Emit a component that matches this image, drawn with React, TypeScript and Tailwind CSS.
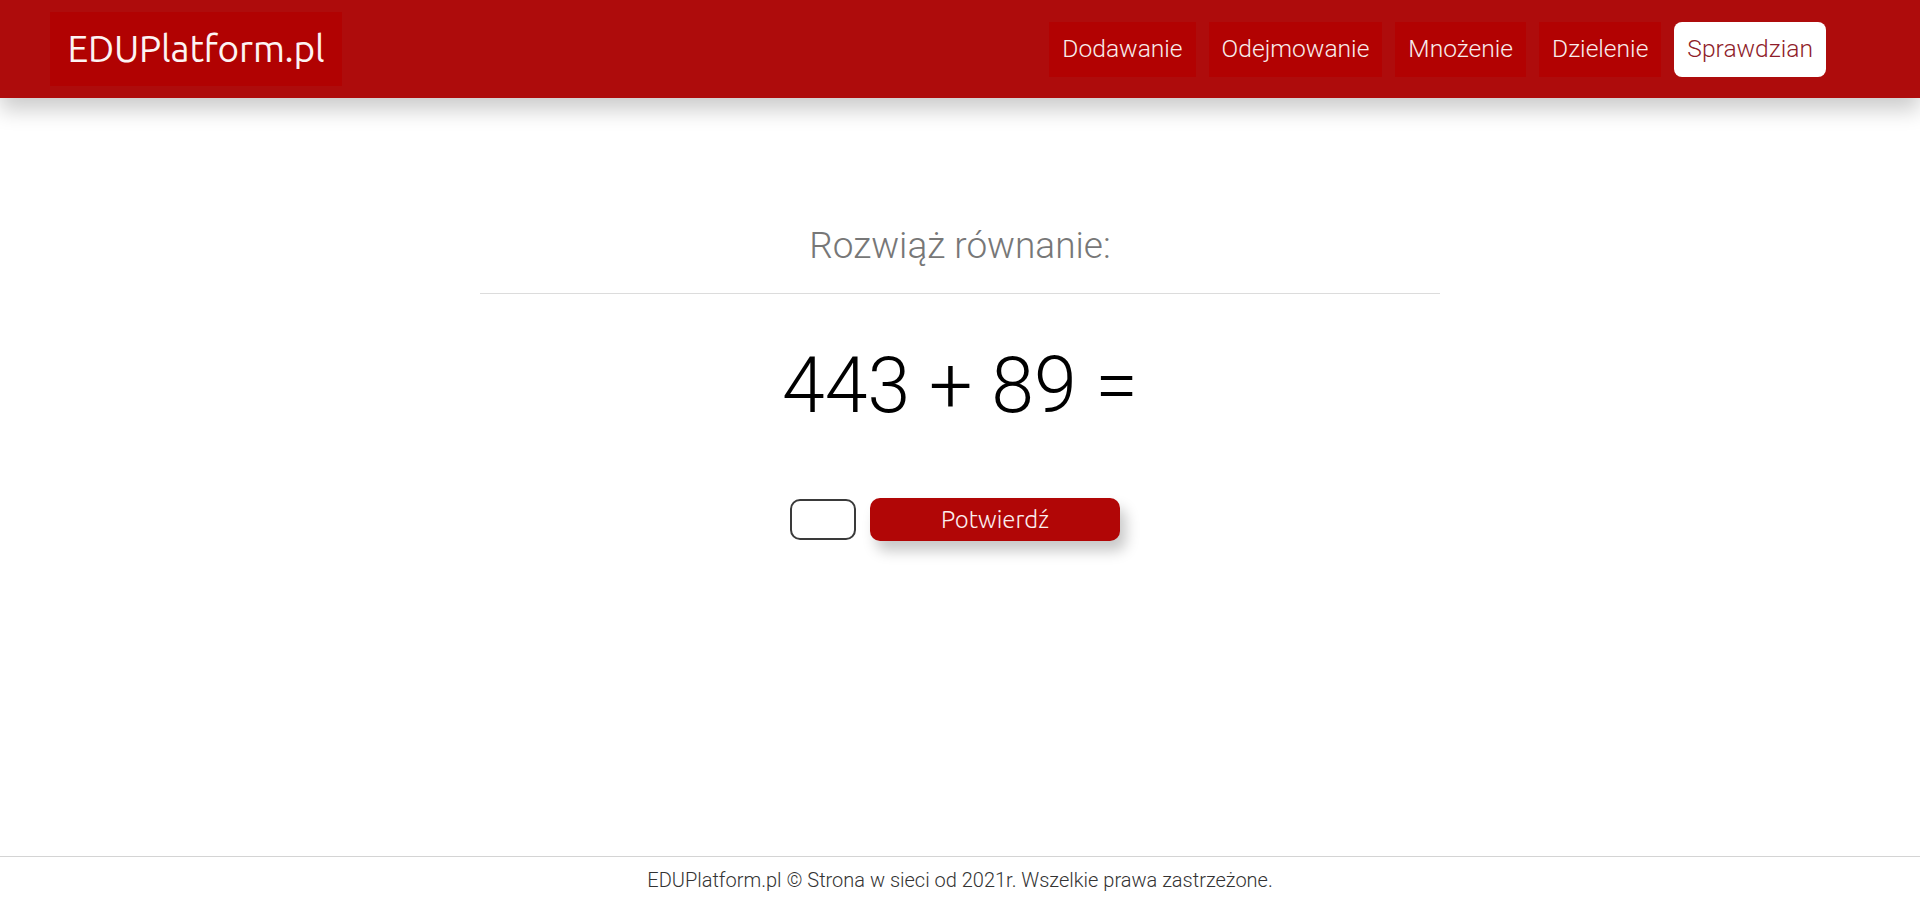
import { useState } from "react";

const links = ["Dodawanie", "Odejmowanie", "Mnożenie", "Dzielenie"];

export default function App() {
  const [answer, setAnswer] = useState("");

  return (
    <div className="flex min-h-screen flex-col bg-white font-['Roboto',sans-serif]">
      <header className="relative z-10 flex h-[98px] items-center justify-between bg-[#ae0c0c] pl-[50px] pr-[94px] shadow-[0_12px_20px_rgba(0,0,0,0.2)]">
        <a className="flex h-[74px] w-[292px] items-center justify-center bg-[#b10202] font-['Ubuntu','Noto_Sans',sans-serif] text-[37px] tracking-[-0.2px] text-[#fdf3f3]">
          EDUPlatform.pl
        </a>
        <nav className="flex items-center gap-[13px]">
          {links.map((link) => (
            <a
              key={link}
              className="flex h-[55px] items-center bg-[#b20202] px-[13px] text-[24.6px] font-light text-[#f8ecec]"
            >
              {link}
            </a>
          ))}
          <a className="flex h-[55px] items-center rounded-lg bg-white px-[13px] text-[24.6px] font-light text-[#8f1d2a]">
            Sprawdzian
          </a>
        </nav>
      </header>

      <main className="flex flex-1 flex-col items-center pt-[127px]">
        <div className="w-[960px] border-b border-[#dcdcdc] pb-[27px] text-center">
          <h2 className="text-[37px] leading-[41px] font-light text-[#777777]">Rozwiąż równanie:</h2>
        </div>
        <div className="mt-[47px] text-[77px] leading-[90px] font-light text-black">443 + 89 =</div>
        <div className="mt-[67px] flex items-center gap-[14px] pr-[10px]">
          <input
            value={answer}
            onChange={(event) => setAnswer(event.target.value)}
            className="h-[41px] w-[66px] rounded-[10px] border-2 border-[#3a3a3a] px-2 text-center text-xl outline-none"
          />
          <button
            type="button"
            className="h-[43px] w-[250px] rounded-[10px] bg-[#b10606] font-['Ubuntu','Noto_Sans',sans-serif] text-[24px] font-light text-[#fbeeee] shadow-[6px_10px_14px_rgba(0,0,0,0.22)]"
          >
            Potwierdź
          </button>
        </div>
      </main>

      <footer className="h-[47px] border-t border-[#d4d4d4] text-center text-[20px] leading-[46px] font-light text-[#333333]">
        EDUPlatform.pl © Strona w sieci od 2021r. Wszelkie prawa zastrzeżone.
      </footer>
    </div>
  );
}
